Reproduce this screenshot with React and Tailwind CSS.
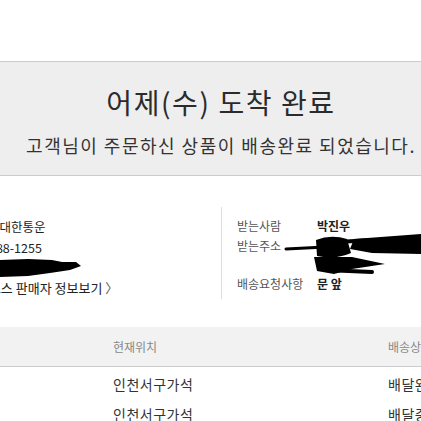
import React from 'react';

const font = { fontFamily: '"Noto Sans CJK KR", "Noto Sans", sans-serif' };

// 마스킹 처리된 부분 (개인정보 가림)
function Redactions() {
  return (
    <svg className="absolute left-0 top-0 w-[421px] h-[421px] pointer-events-none" viewBox="0 0 421 421">
      <path d="M0 260 L28 259 L52 260 L62 262 L76 262 L81 266 L70 270 L50 273 L28 276 L0 277 Z" fill="#000" />
      <path d="M286 249 L345 246" stroke="#000" strokeWidth="3" strokeLinecap="round" />
      <path d="M316 240 Q331 234 347 239 L351 253 Q335 260 317 256 Z" fill="#000" />
      <path d="M354 239 L421 234 L421 254 L372 253 L350 249 Z" fill="#000" />
      <path d="M320 243 L372 240" stroke="#000" strokeWidth="4" strokeLinecap="round" />
      <path d="M314 257 L352 257 L385 264 L352 269 L334 274 L317 271 Z" fill="#000" />
      <path d="M325 270 L372 272" stroke="#000" strokeWidth="4" strokeLinecap="round" />
    </svg>
  );
}

export default function App() {
  return (
    <div className="relative w-[421px] h-[421px] overflow-hidden bg-white text-[#333]" style={font}>
      <div className="h-[61px]" />
      <section className="h-[115px] bg-[#eeeeee] border-y border-[#cccccc] flex flex-col items-center pl-[21px] pt-[20px]">
        <h1 className="text-[28px] leading-[40px] tracking-[1.6px] text-[#2b2b2b] whitespace-nowrap">어제(수) 도착 완료</h1>
        <p className="mt-[10px] text-[18px] leading-[26px] tracking-[1.5px] text-[#333] whitespace-nowrap">고객님이 주문하신 상품이 배송완료 되었습니다.</p>
      </section>

      <section className="flex pt-[31px] h-[151px]">
        <div className="w-[221px] shrink-0 pt-[10px] text-[12.5px] leading-[20.5px] text-[#222] overflow-hidden">
          <p className="ml-[-15px] whitespace-nowrap">CJ대한통운</p>
          <p className="ml-[-18px] whitespace-nowrap">1588-1255</p>
          <div className="h-[20px]" />
          <p className="ml-[-47px] text-[13px] whitespace-nowrap">로켓그로스 판매자 정보보기 <span className="text-[#555]">〉</span></p>
        </div>
        <div className="border-l border-[#dddddd] h-[92px] pl-[15px] pt-[9px] text-[12px] leading-[20px] flex-1">
          <div className="flex">
            <span className="w-[80px] shrink-0 text-[#555]">받는사람</span>
            <span className="text-[#222] font-semibold">박진우</span>
          </div>
          <div className="flex">
            <span className="w-[80px] shrink-0 text-[#555]">받는주소</span>
          </div>
          <div className="h-[18px]" />
          <div className="flex">
            <span className="w-[80px] shrink-0 text-[#555] whitespace-nowrap">배송요청사항</span>
            <span className="text-[#222] font-semibold">문 앞</span>
          </div>
        </div>
      </section>

      <div className="h-[40px] bg-[#f2f2f2] border-b border-[#cccccc] flex items-center text-[12px] text-[#888] whitespace-nowrap">
        <span className="ml-[113px] w-[275px] shrink-0">현재위치</span>
        <span className="shrink-0">배송상태</span>
      </div>
      <div className="text-[14px] text-[#333] tracking-[0.5px]">
        {['배달완료', '배달중'].map((s, i) => (
          <div key={i} className="flex h-[30px] items-center whitespace-nowrap first:mt-[2px]">
            <span className="ml-[113px] w-[275px] shrink-0">인천서구가석</span>
            <span className="shrink-0">{s}</span>
          </div>
        ))}
      </div>

      <Redactions />
    </div>
  );
}
